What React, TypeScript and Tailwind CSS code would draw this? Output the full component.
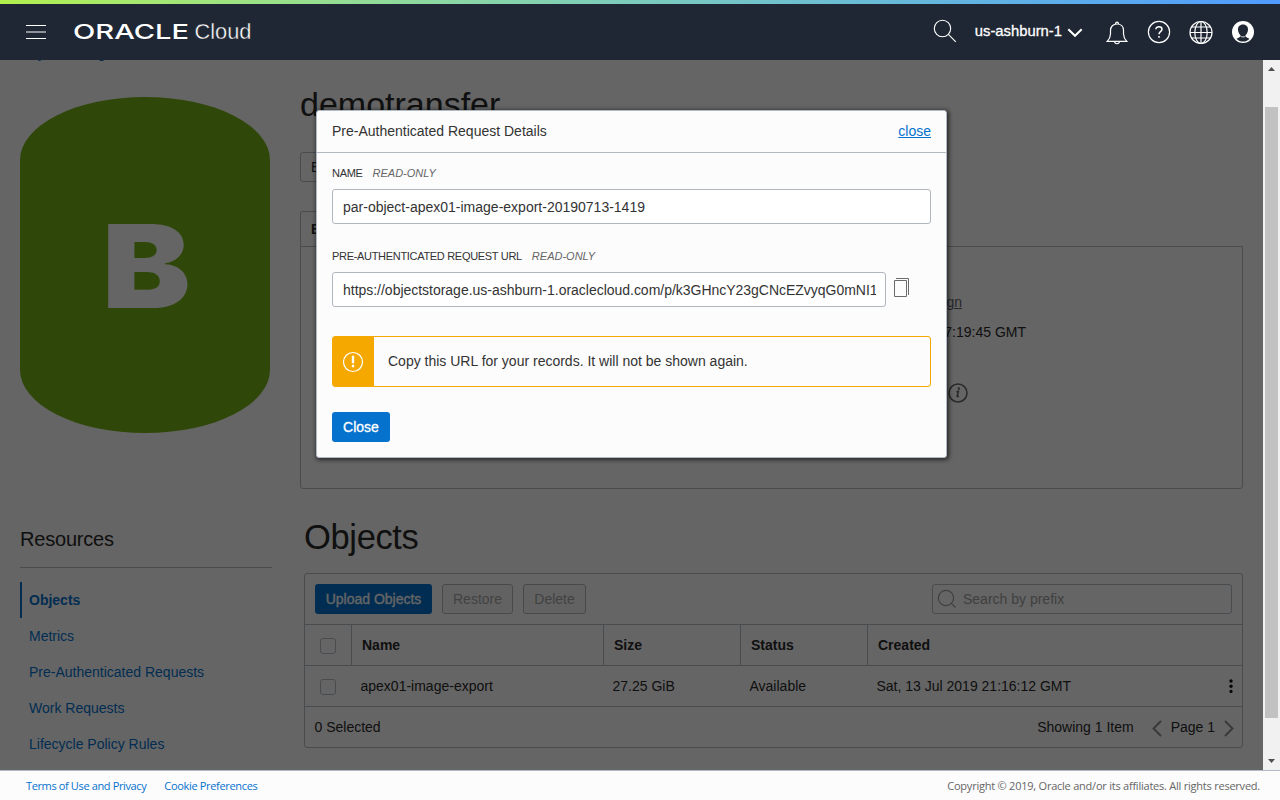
import React from "react";

const navItems = ["Metrics", "Pre-Authenticated Requests", "Work Requests", "Lifecycle Policy Rules"];

function Header() {
  return (
    <header className="h-[60px] shrink-0 bg-[#1e2733] flex flex-col">
      <div className="h-1 bg-linear-to-r from-[#b2f04b] to-[#4f9bff]" />
      <div className="flex-1 flex items-center pl-[26px] pr-[25px]">
        <div className="flex flex-col w-5">
          <span className="h-px bg-white" />
          <span className="h-[2px] mt-[5px] mb-[5px] bg-[#8e9399]" />
          <span className="h-px bg-white" />
        </div>
        <svg width="180" height="30" viewBox="0 0 180 30" className="ml-7 overflow-visible" fill="#fff">
          <text x="-1" y="22" fontFamily="Inter, sans-serif" fontWeight="550" fontSize="20.6" textLength="116" lengthAdjust="spacingAndGlyphs">ORACLE</text>
          <text x="120.500" y="22" fontFamily="'Liberation Sans', sans-serif" fontSize="22.500" textLength="57" lengthAdjust="spacingAndGlyphs" stroke="#1e2733" strokeWidth="0.4">Cloud</text>
        </svg>
        <div className="ml-auto flex items-center">
          <svg width="24" height="24" viewBox="0 0 24 24" fill="none" stroke="#fff" strokeWidth="1.1" className="mr-[18px] -mt-[3px]">
            <circle cx="9.5" cy="9.5" r="8.2" />
            <path d="M15.4 15.4L22.8 22.8" />
          </svg>
          <span className="text-[14.8px] leading-4 text-white [-webkit-text-stroke:0.3px_white] -mt-[2px]">us-ashburn-1</span>
          <svg width="16" height="10" viewBox="0 0 16 10" fill="none" stroke="#fff" strokeWidth="2" className="ml-[5px] mr-[23px] mt-[2px]">
            <path d="M1.3 1.2L8 7.8L14.7 1.2" />
          </svg>
          <svg width="22" height="24" viewBox="0 0 22 24" fill="none" stroke="#fff" strokeWidth="1.2" className="mr-[19px] mt-px">
            <path d="M1.2 20.3C3.2 18.2 4.5 16.5 4.5 13V9.5C4.5 5.5 7.2 3 11 3S17.500 5.500 17.500 9.500V13C17.500 16.500 18.800 18.200 20.800 20.300Z" />
            <path d="M9.500 3C9.300 .6 12.700 .6 12.500 3M8.500 20.500C9 23.500 13 23.500 13.500 20.500" />
          </svg>
          <svg width="24" height="24" viewBox="0 0 24 24" fill="none" stroke="#fff" strokeWidth="1.2" className="mr-[18px]">
            <circle cx="12" cy="12" r="10.600" />
            <path d="M8.900 9.200C8.900 5.800 15 5.900 15 9.200C15 11.500 12 11.200 12 14.300M12 16V17.800" strokeWidth="1.500" />
          </svg>
          <svg width="24" height="24" viewBox="0 0 24 24" fill="none" stroke="#fff" strokeWidth="1.2" className="mr-[18px]">
            <circle cx="12" cy="12.500" r="11" />
            <ellipse cx="12" cy="12.500" rx="6.200" ry="11" />
            <path d="M12 1.500V23.500M1 12.500H23M3 7H21M3 18H21" />
          </svg>
          <svg width="24" height="24" viewBox="0 0 24 24">
            <circle cx="12" cy="12" r="11" fill="#fff" />
            <path d="M12 4.500C8.700 4.500 6.800 6.800 7 10C7.200 12.600 8.500 14.400 9.600 15.500C9.500 17 8 17.600 5.500 18.700C9 22.500 15 22.500 18.500 18.700C16 17.600 14.500 17 14.400 15.500C15.500 14.400 16.800 12.600 17 10C17.200 6.800 15.300 4.500 12 4.500Z" fill="#1e2733" />
            <path d="M9.600 16.300C11 17.200 13 17.200 14.400 16.300" fill="none" stroke="#fff" strokeWidth="0.800" />
          </svg>
        </div>
      </div>
    </header>
  );
}

function Sidebar() {
  return (
    <aside className="w-[252px] shrink-0 pt-9">
      <div className="w-[250px] h-[336px] bg-[#76b419] rounded-[125px/63px]">
        <svg width="250" height="336" viewBox="0 0 250 336">
          <text x="82" y="211" fontFamily="Inter, sans-serif" fontWeight="900" fontSize="115.500" textLength="88.500" lengthAdjust="spacingAndGlyphs" fill="#fcfcfc">B</text>
        </svg>
      </div>
      <h2 className="mt-[92px] text-[20px] tracking-[-0.2px] leading-7 pb-[14px] h-[43px] border-b border-[#b6bdc6]">Resources</h2>
      <nav className="mt-[14px] text-[#0572ce]">
        <div className="h-9 border-l-2 border-[#0572ce] pl-[7px] leading-9 font-bold">Objects</div>
        {navItems.map((t) => (
          <div key={t} className="h-9 pl-[9px] leading-9">{t}</div>
        ))}
      </nav>
    </aside>
  );
}

function BucketInfo() {
  return (
    <section>
      <h1 className="mt-[23px] h-[39px] text-[34px] leading-[40px]">demotransfer</h1>
      <div className="mt-[29px] h-[30px] flex gap-[10px]">
        <button className="border border-[#b6bdc6] rounded-[3px] px-[10px]">Edit Visibility</button>
        <button className="border border-[#b6bdc6] rounded-[3px] px-[10px]">Delete</button>
      </div>
      <div className="mt-[29px] h-[35px] flex">
        <div className="border border-b-0 border-[#b6bdc6] rounded-t-[3px] px-[10px] leading-[35px] font-bold">Bucket Information</div>
        <div className="px-[10px] leading-[35px] text-[#0572ce]">Tags</div>
      </div>
      <div className="h-[243px] border border-[#b6bdc6] rounded-b-[3px] rounded-tr-[1px] flex">
        <div className="w-[725px] flex flex-col items-end pt-[42px]">
          <div className="h-[30px] leading-[27px] mr-[64px] underline text-[#666]">Assign</div>
          <div className="h-[30px] leading-[27px]">Thu, 11 Jul 2019 17:19:45 GMT</div>
          <div className="h-[30px]" />
          <svg width="20" height="20" viewBox="0 0 20 20" fill="none" stroke="#666" strokeWidth="1.500" className="mr-[58px] mt-[4px]">
            <circle cx="10" cy="10" r="9" />
            <path d="M8.400 8.700L10.400 8.200L9.200 13C9 14 10 13.800 11 13" />
            <circle cx="10.800" cy="5.600" r=".5" />
          </svg>
        </div>
      </div>
    </section>
  );
}

function Box() {
  return <span className="block ml-[15px] size-4 border border-[#b6bdc6] rounded-[3px]" />;
}

function ObjectsTable() {
  return (
    <section className="ml-1">
      <h1 className="mt-[28px] h-[40px] text-[34.500px] tracking-[-0.35px] leading-[40px]">Objects</h1>
      <div className="mt-[16px] border border-[#b6bdc6] rounded-[3px]">
        <div className="h-[50px] flex items-center px-[10px] gap-[10px]">
          <button className="h-[30px] w-[117px] bg-[#0572ce] rounded-[3px] text-[#fcfcfc] [-webkit-text-stroke:0.3px_#fcfcfc]">Upload Objects</button>
          <button className="h-[30px] w-[71px] bg-[#f5f5f5] border border-[#b6b6b6] rounded-[3px] text-[#a6a6a6]">Restore</button>
          <button className="h-[30px] w-[63px] bg-[#f5f5f5] border border-[#b6b6b6] rounded-[3px] text-[#a6a6a6]">Delete</button>
          <div className="ml-auto w-[300px] h-[30px] border border-[#b6bdc6] rounded-[3px] flex items-center text-[#a0a0a0]">
            <svg width="20" height="20" viewBox="0 0 20 20" fill="none" stroke="#a0a0a0" strokeWidth="1.200" className="ml-[4px] mr-[6px]">
              <circle cx="9" cy="9" r="7.600" />
              <path d="M14.400 14.400L18.500 18.500" />
            </svg>
            Search by prefix
          </div>
        </div>
        <div className="h-[41px] border-t border-[#b6bdc6] flex items-stretch font-bold leading-[40px]">
          <div className="w-[46px] flex items-center pt-px"><Box /></div>
          <div className="w-[252px] border-l border-[#b6bdc6] pl-[10px]">Name</div>
          <div className="w-[137px] border-l border-[#b6bdc6] pl-[10px]">Size</div>
          <div className="w-[127px] border-l border-[#b6bdc6] pl-[10px]">Status</div>
          <div className="border-l border-[#b6bdc6] pl-[10px]">Created</div>
        </div>
        <div className="h-[41px] border-t border-[#b6bdc6] flex leading-[40px]">
          <div className="w-[46px] flex items-center pt-px"><Box /></div>
          <div className="w-[252px] pl-[9.5px]">apex01-image-export</div>
          <div className="w-[137px] pl-[9.5px]">27.25 GiB</div>
          <div className="w-[127px] pl-[9.5px]">Available</div>
          <div className="pl-[9.5px]">Sat, 13 Jul 2019 21:16:12 GMT</div>
          <svg width="4" height="14" viewBox="0 0 4 14" fill="#111" className="ml-auto mr-[9px] mt-[13px]">
            <circle cx="2" cy="2" r="1.700" /><circle cx="2" cy="7.200" r="1.700" /><circle cx="2" cy="12.400" r="1.600" />
          </svg>
        </div>
        <div className="h-[41px] border-t border-[#b6bdc6] flex items-center leading-[40px] pl-[9.5px] pr-[8px]">
          <span>0 Selected</span>
          <span className="ml-auto">Showing 1 Item</span>
          <svg width="10" height="17" viewBox="0 0 10 17" fill="none" stroke="#8a8a8a" strokeWidth="1.800" className="ml-[18px] mr-[9px] mt-[3px]">
            <path d="M9 1L1.500 8.500L9 16" />
          </svg>
          <span>Page 1</span>
          <svg width="10" height="17" viewBox="0 0 10 17" fill="none" stroke="#8a8a8a" strokeWidth="1.800" className="ml-[9px] mt-[3px]">
            <path d="M1 1L8.500 8.500L1 16" />
          </svg>
        </div>
      </div>
    </section>
  );
}

function FieldLabel({ children }: { children: React.ReactNode }) {
  return (
    <div className="flex gap-[10px] text-[11px] leading-4">
      <span className="tracking-[-0.31px]">{children}</span>
      <span className="italic text-[#666]">READ-ONLY</span>
    </div>
  );
}

function Dialog() {
  return (
    <div className="absolute left-[316px] top-[50px] w-[631px] h-[348px] bg-[#fcfcfc] border border-[#b0bac7] rounded-[3px] shadow-[1px_1px_4px_1px_rgba(0,0,0,0.6)] text-[#333]">
      <div className="h-[42px] border-b border-[#b0b9c4] flex justify-between px-[15px] leading-[41px]">
        <span>Pre-Authenticated Request Details</span>
        <a className="text-[#0572ce] underline">close</a>
      </div>
      <div className="px-[15px] pt-[12px]">
        <FieldLabel>NAME</FieldLabel>
        <div className="mt-[8px] h-[35px] border border-[#b0b6c0] rounded-[3px] bg-white px-[10px] leading-[35px]">par-object-apex01-image-export-20190713-1419</div>
        <div className="mt-[24px]"><FieldLabel>PRE-AUTHENTICATED REQUEST URL</FieldLabel></div>
        <div className="mt-[8px] flex">
          <div className="w-[554px] h-[35px] border border-[#b0b6c0] rounded-[3px] bg-white pl-[10px] pr-[9px] leading-[35px]">
            <div className="overflow-hidden whitespace-nowrap tracking-[-0.02px]">https://objectstorage.us-ashburn-1.oraclecloud.com/p/k3GHncY23gCNcEZvyqG0mNI1</div>
          </div>
          <svg width="16" height="20" viewBox="0 0 16 20" fill="none" stroke="#6b6b6b" className="ml-[8px] mt-[6px]">
            <path d="M.5 2.500H12.500V18.500H.5ZM2 .5H14.500V17" />
          </svg>
        </div>
        <div className="mt-[29px] h-[51px] border border-[#f5a800] rounded-[3px] flex">
          <div className="w-[41px] bg-[#f5a800] flex items-center justify-center">
            <svg width="22" height="22" viewBox="0 0 22 22" fill="none" stroke="#fff" className="mr-[2px] mt-px">
              <circle cx="11" cy="11" r="9.500" strokeWidth="1.200" />
              <path d="M11 4.800V12.200M11 13.800V16.200" strokeWidth="2.400" />
            </svg>
          </div>
          <span className="pl-[14px] leading-[49px]">Copy this URL for your records. It will not be shown again.</span>
        </div>
        <button className="mt-[25px] block w-[58px] h-[30px] rounded-[3px] bg-[#0572ce] text-white [-webkit-text-stroke:0.3px_white]">Close</button>
      </div>
    </div>
  );
}

function Scrollbar() {
  return (
    <div className="w-[17px] bg-[#f1f1f1] flex flex-col items-center shrink-0">
      <svg width="17" height="17" viewBox="0 0 17 17" fill="#505050"><path d="M5 11L8.500 7L12 11Z" /></svg>
      <div className="mt-[30px] w-[13px] h-[611px] bg-[#c1c1c1]" />
      <svg width="17" height="17" viewBox="0 0 17 17" fill="#505050" className="mt-auto"><path d="M5 6L8.500 10L12 6Z" /></svg>
    </div>
  );
}

export default function App() {
  return (
    <div className="w-[1280px] h-[800px] flex flex-col overflow-hidden font-['Liberation_Sans',Arial,sans-serif] text-[14px] text-[#2a2a2a]">
      <Header />
      <main className="relative h-[710px] flex overflow-hidden bg-[#fcfcfc]">
        <div className="relative flex-1 h-[710px] overflow-hidden">
          <div className="-mt-[15px] h-4 pl-5 leading-4 text-[#0572ce]">Object Storage</div>
          <div className="flex pl-5 pr-5">
            <Sidebar />
            <div className="flex-1 ml-7">
              <BucketInfo />
              <ObjectsTable />
            </div>
          </div>
          <div className="absolute inset-0 bg-black/60" />
        </div>
        <Scrollbar />
        <Dialog />
      </main>
      <footer className="h-[30px] border-t border-[#b0bac7] bg-[#fcfcfc] flex items-center pl-[26px] pr-5 font-['Open_Sans','Noto_Sans',sans-serif] text-[11px] text-[#666] pt-[2px]">
        <span className="text-[#0572ce] tracking-[-0.37px]">Terms of Use and Privacy</span>
        <span className="ml-[18px] text-[#0572ce] tracking-[-0.33px]">Cookie Preferences</span>
        <span className="ml-auto tracking-[-0.23px]">Copyright © 2019, Oracle and/or its affiliates. All rights reserved.</span>
      </footer>
    </div>
  );
}
